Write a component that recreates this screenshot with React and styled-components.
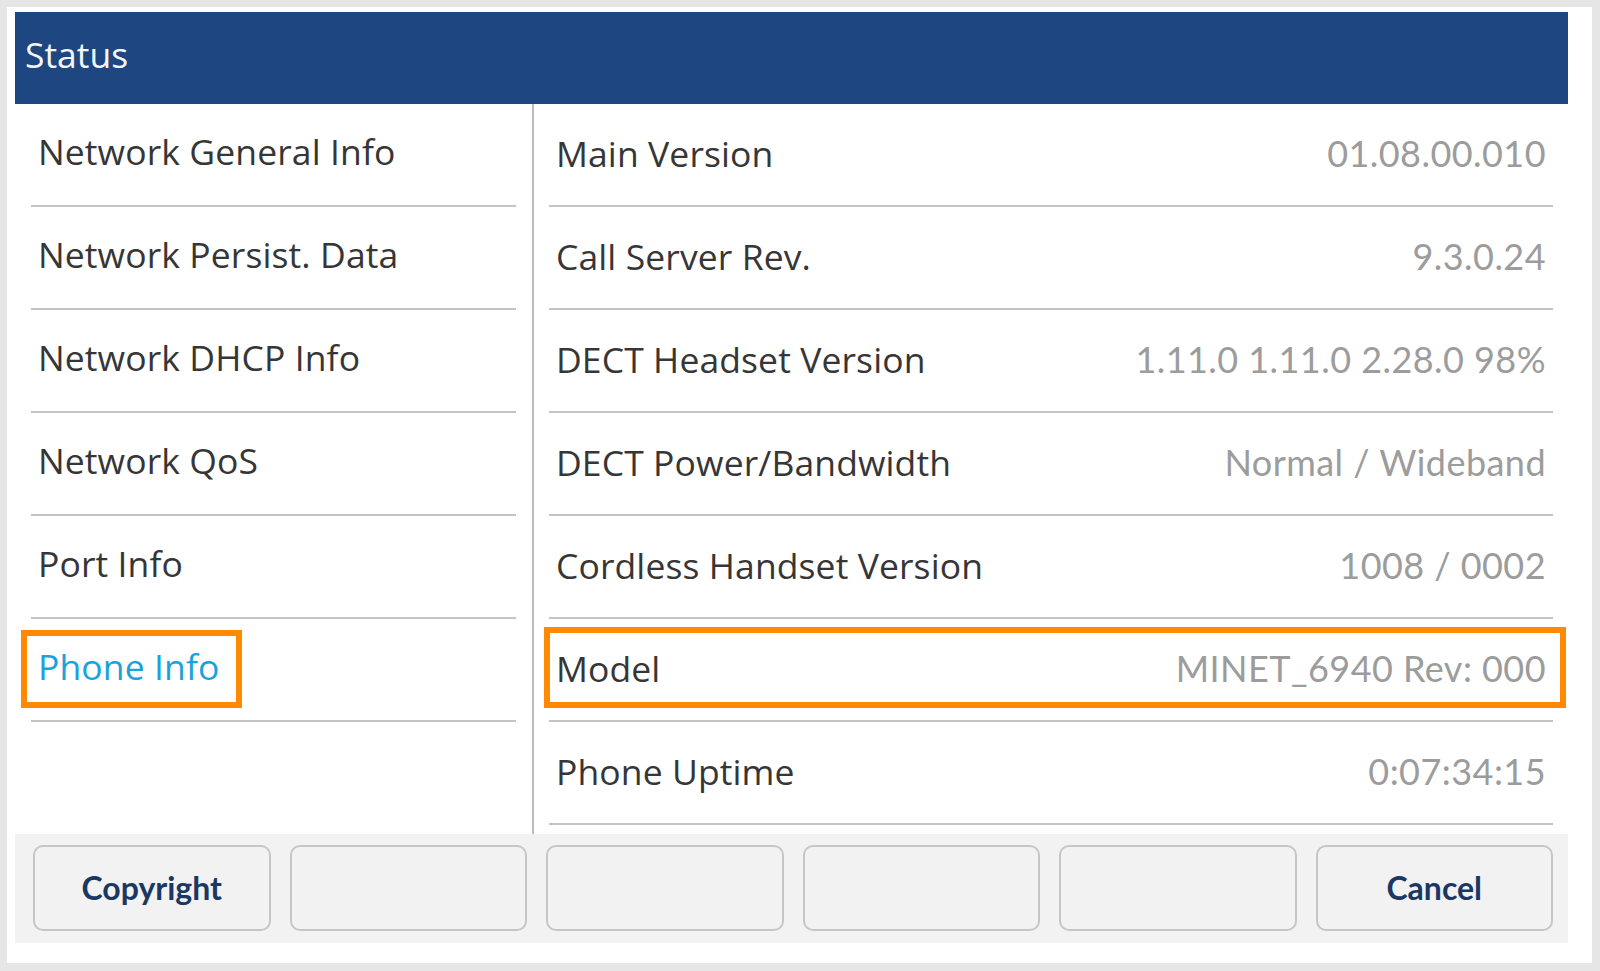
import React from "react";
import styled, { createGlobalStyle } from "styled-components";

const GlobalStyle = createGlobalStyle`
  html, body { margin: 0; padding: 0; background: #e6e6e6; }
  * { box-sizing: border-box; }
`;

const Page = styled.div`
  width: 1600px;
  height: 971px;
  padding: 7px 8px 8px 7px;
  background: #e6e6e6;
`;

const Panel = styled.div`
  height: 100%;
  background: #ffffff;
  padding: 5px 24px 20px 8px;
  display: flex;
  flex-direction: column;
`;

const Header = styled.div`
  height: 92px;
  flex: none;
  background: #1e4680;
  color: #f4f6fa;
  font-family: "Open Sans", sans-serif;
  font-size: 35.5px;
  display: flex;
  align-items: center;
  padding: 0 0 8px 10px;
`;

const Body = styled.div`
  flex: 1;
  display: flex;
  min-height: 0;
`;

const LeftCol = styled.div`
  width: 517px;
  flex: none;
  padding: 0 16px;
`;

const RightCol = styled.div`
  flex: 1;
  border-left: 2px solid #bdbdbd;
  padding: 0 15px;
`;

const Row = styled.div`
  position: relative;
  height: 103px;
  border-bottom: 2px solid #c4c4c4;
  display: flex;
  align-items: center;
  justify-content: space-between;
  padding: ${(p) => (p.$side === "left" ? "0 0 7px 7px" : "0 7px 4px 7px")};
`;

const Label = styled.span`
  font-family: "Open Sans", sans-serif;
  font-size: 35.5px;
  letter-spacing: 0.1px;
  color: ${(p) => (p.$active ? "#1aa2dd" : "#363636")};
  white-space: nowrap;
`;

const Value = styled.span`
  font-family: Lato, sans-serif;
  font-size: 36px;
  letter-spacing: 0.45px;
  color: #9c9c9c;
  white-space: nowrap;
`;

const Highlight = styled.div`
  position: absolute;
  border: 6px solid #ff8a00;
  pointer-events: none;
  left: ${(p) => p.$left}px;
  top: ${(p) => p.$top}px;
  width: ${(p) => p.$width}px;
  height: ${(p) => p.$height}px;
`;

const Footer = styled.div`
  height: 109px;
  flex: none;
  background: #f2f2f2;
  display: grid;
  grid-template-columns: repeat(6, 1fr);
  column-gap: 19px;
  padding: 11px 15px 12px 18px;
`;

const SoftKey = styled.div`
  border: 2px solid #c6c6c6;
  border-radius: 10px;
  background: #f2f2f2;
  display: flex;
  align-items: center;
  justify-content: center;
  padding-bottom: 2px;
  font-family: Lato, sans-serif;
  font-weight: 700;
  font-size: 32px;
  color: #1b3763;
`;

const menu = [
  "Network General Info",
  "Network Persist. Data",
  "Network DHCP Info",
  "Network QoS",
  "Port Info",
  "Phone Info",
];

const info = [
  ["Main Version", "01.08.00.010"],
  ["Call Server Rev.", "9.3.0.24"],
  ["DECT Headset Version", "1.11.0 1.11.0 2.28.0 98%"],
  ["DECT Power/Bandwidth", "Normal / Wideband"],
  ["Cordless Handset Version", "1008 / 0002"],
  ["Model", "MINET_6940 Rev: 000"],
  ["Phone Uptime", "0:07:34:15"],
];

const keys = ["Copyright", "", "", "", "", "Cancel"];

export default function App() {
  return (
    <>
      <GlobalStyle />
      <Page>
        <Panel>
          <Header>Status</Header>
          <Body>
            <LeftCol>
              {menu.map((m) => {
                const active = m === "Phone Info";
                return (
                  <Row key={m} $side="left">
                    <Label $active={active}>{m}</Label>
                    {active && (
                      <Highlight $left={-10} $top={11} $width={221} $height={78} />
                    )}
                  </Row>
                );
              })}
            </LeftCol>
            <RightCol>
              {info.map(([k, v]) => (
                <Row key={k} $side="right">
                  <Label>{k}</Label>
                  <Value>{v}</Value>
                  {k === "Model" && (
                    <Highlight $left={-5} $top={8} $width={1022} $height={81} />
                  )}
                </Row>
              ))}
            </RightCol>
          </Body>
          <Footer>
            {keys.map((k, i) => (
              <SoftKey key={i}>{k}</SoftKey>
            ))}
          </Footer>
        </Panel>
      </Page>
    </>
  );
}
